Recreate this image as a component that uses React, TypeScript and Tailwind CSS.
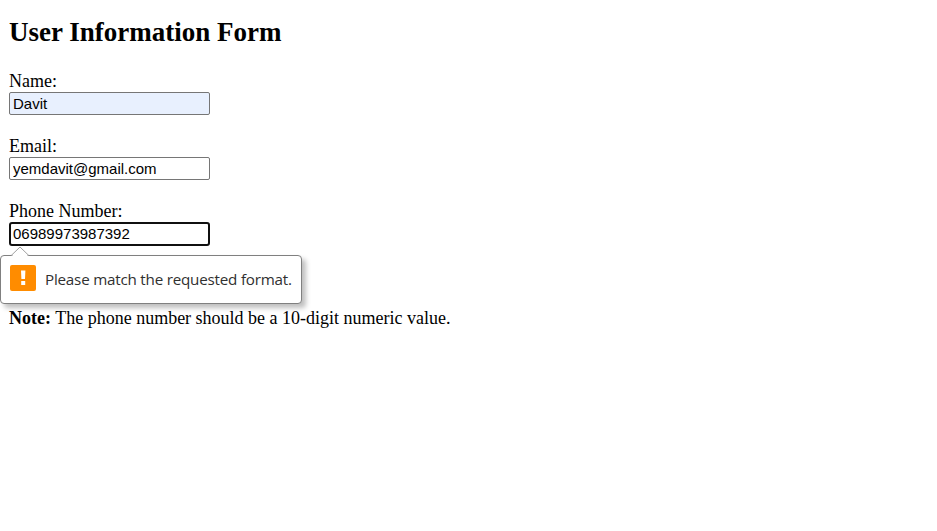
import { useState } from "react";

type FieldProps = {
  id: string;
  label: string;
  type?: string;
  initial: string;
  className: string;
};

function Field({ id, label, type = "text", initial, className }: FieldProps) {
  const [value, setValue] = useState(initial);
  return (
    <div className="flex h-[65px] flex-col items-start">
      <label htmlFor={id} className="mb-px h-5 leading-5">
        {label}
      </label>
      <input
        id={id}
        type={type}
        value={value}
        onChange={(e) => setValue(e.target.value)}
        className={`w-[201px] font-['Liberation_Sans',Arial,sans-serif] text-[15px] text-black outline-none ${className}`}
      />
    </div>
  );
}

function ValidationBubble() {
  return (
    <div
      role="alert"
      className="absolute top-[255px] left-0 flex h-[49px] w-[302px] items-center rounded-[4px] border border-[#808080] bg-white pl-[9px] shadow-[4px_4px_5px_rgba(0,0,0,0.25)]"
    >
      <svg className="absolute -top-[10px] left-[9px]" width="20" height="11" viewBox="0 0 20 11" fill="none">
        <path d="M1 11L10 1.5L19 11Z" fill="white" />
        <path d="M1 9.7L10 1L19 9.7" stroke="#a0a0a0" />
      </svg>
      <svg className="-mt-[3px] shrink-0" width="26" height="26" viewBox="0 0 26 26">
        <rect width="26" height="26" rx="2" fill="#ff8c00" />
        <path d="M11 5.4h4.4L15 14h-3.6zM11.2 16h4v4h-4z" fill="white" />
      </svg>
      <span className="ml-[9px] font-['Open_Sans','Noto_Sans',sans-serif] text-[15.2px] tracking-[-0.21px] whitespace-nowrap text-[#303030]">
        Please match the requested format.
      </span>
    </div>
  );
}

export default function App() {
  return (
    <main className="relative h-[531px] w-full bg-white pt-[17px] pl-[9px] font-['Liberation_Serif','Times_New_Roman',serif] text-[18px] text-black">
      <h2 className="mb-6 text-[27px] leading-[30px] font-bold">User Information Form</h2>
      <form>
        <Field id="name" label="Name:" initial="Davit" className="h-[23px] rounded-[2px] border border-[#767676] bg-[#e8f0fe] px-[3px]" />
        <Field id="email" label="Email:" type="email" initial="yemdavit@gmail.com" className="h-[23px] rounded-[2px] border border-[#767676] bg-white px-[3px]" />
        <Field id="phone" label="Phone Number:" type="tel" initial="06989973987392" className="h-6 rounded-[3px] border-2 border-[#101010] bg-white px-[2px] pb-px" />
      </form>
      <p className="mt-[42px] leading-5">
        <strong>Note:</strong> The phone number should be a 10-digit numeric value.
      </p>
      <ValidationBubble />
    </main>
  );
}
